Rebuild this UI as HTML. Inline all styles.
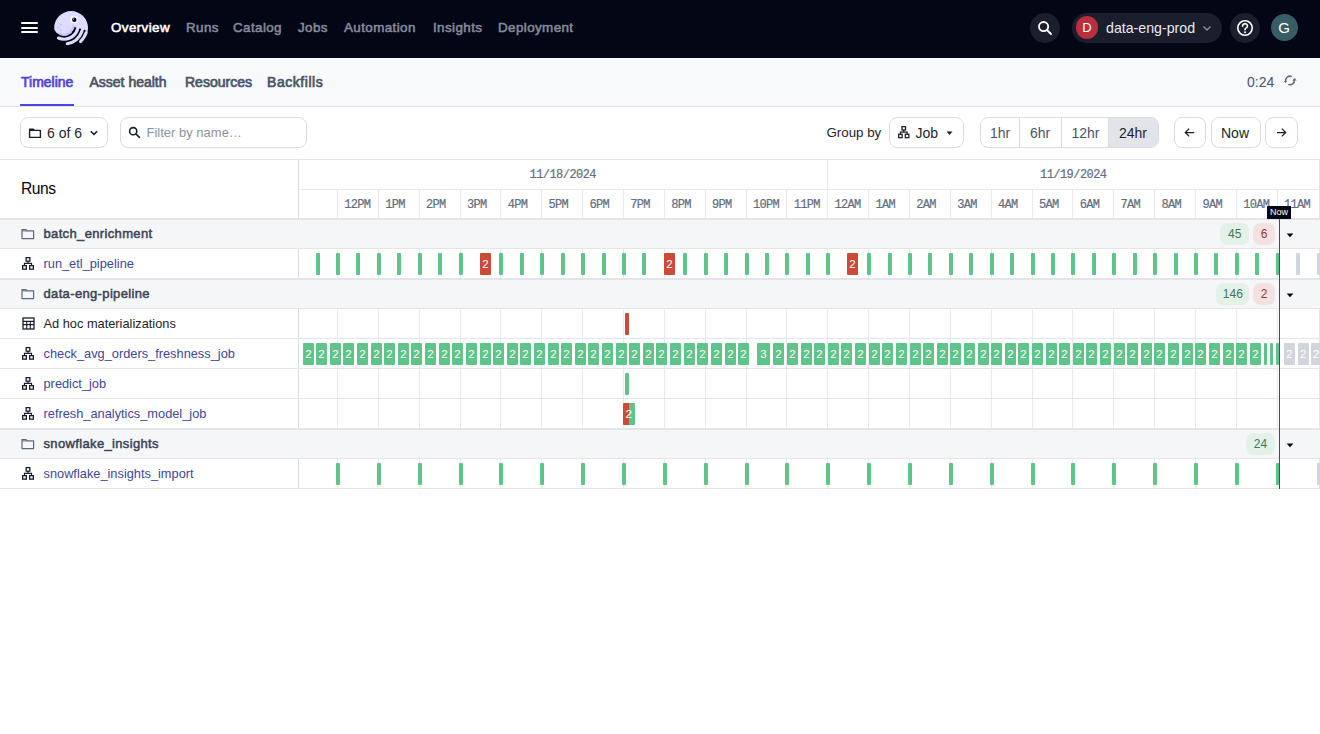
<!DOCTYPE html>
<html><head><meta charset="utf-8"><style>
*{box-sizing:border-box;margin:0;padding:0}
html,body{width:1320px;height:734px;overflow:hidden;background:#fff;font-family:"Liberation Sans",sans-serif;color:#030615}
.a{position:absolute}
.nav{left:0;top:0;width:1320px;height:58px;background:#030615}
.navtxt{top:18.6px;font-size:13.4px;letter-spacing:0.4px;font-weight:400;-webkit-text-stroke:0.55px currentColor;color:#848a9c;white-space:nowrap;line-height:18px}
.sub{left:0;top:58px;width:1320px;height:49px;background:#f8f9fb;border-bottom:1px solid #e3e5ea}
.tab{top:73px;font-size:14px;font-weight:400;-webkit-text-stroke:0.7px currentColor;color:#4b5567;line-height:18px;white-space:nowrap}
.btn{border:1px solid #d9dce3;border-radius:8px;background:#fff;height:31px;top:117px}
.t14{font-size:14px;line-height:18px;white-space:nowrap}
.mono{font-family:"Liberation Mono",monospace;font-size:12px;letter-spacing:-0.55px;color:#646d80;-webkit-text-stroke:0.2px currentColor;line-height:14px;white-space:nowrap}
.hl{width:1px;background:#e8eaee}
.grp{left:0;width:1320px;height:30px;background:#f5f6f8}
.gname{font-size:13px;font-weight:400;letter-spacing:0.35px;-webkit-text-stroke:0.5px currentColor;color:#3c4354;line-height:16px;white-space:nowrap}
.jname{font-size:12.8px;color:#40469a;line-height:16px;white-space:nowrap}
.bar{height:22px;border-radius:1px}
.box{height:22px;border-radius:1px;color:#fff;font-size:11.5px;line-height:22px;text-align:center;overflow:hidden}
.pill{height:22px;top:0;border-radius:7px;font-size:12px;line-height:22px;text-align:center}
</style></head>
<body>
<div class="a nav"></div><div class="a" style="left:21px;top:22px;width:17px;height:2px;background:#fff;border-radius:1px"></div><div class="a" style="left:21px;top:26.6px;width:17px;height:2px;background:#fff;border-radius:1px"></div><div class="a" style="left:21px;top:31.2px;width:17px;height:2px;background:#fff;border-radius:1px"></div><svg class="a" style="left:50px;top:7.5px" width="42" height="41" viewBox="0 0 42 41"><defs><clipPath id="hc"><circle cx="21.099999999999994" cy="20" r="18.2"/></clipPath></defs><g clip-path="url(#hc)"><circle cx="21.099999999999994" cy="20" r="16.9" fill="#dedcfc"/><path d="M23.56 17.84 A9.6 9.6 0 0 1 9.20 25.31" fill="none" stroke="#c9c6f6" stroke-width="2.2" stroke-linecap="round"/><path d="M37.30 27.37 A25.5 25.5 0 0 1 -10.63 10.40" fill="none" stroke="#030615" stroke-width="29.3"/><path d="M25.29 20.24 A11.75 11.75 0 0 1 23.00 24.55" fill="none" stroke="#030615" stroke-width="2.2" stroke-linecap="round"/><path d="M29.96 21.58 A16.6 16.6 0 0 1 26.72 27.67" fill="none" stroke="#030615" stroke-width="2.2" stroke-linecap="round"/><path d="M34.57 22.90 A21.4 21.4 0 0 1 30.39 30.76" fill="none" stroke="#030615" stroke-width="2.2" stroke-linecap="round"/><path d="M27.34 21.86 A14.2 14.2 0 0 1 8.45 30.07" fill="none" stroke="#dedcfc" stroke-width="3.2" stroke-linecap="round"/><path d="M31.85 23.50 A19.0 19.0 0 0 1 17.30 35.71" fill="none" stroke="#dedcfc" stroke-width="3.2" stroke-linecap="round"/><path d="M36.08 25.04 A23.5 23.5 0 0 1 30.62 33.62" fill="none" stroke="#dedcfc" stroke-width="3.2" stroke-linecap="round"/></g><circle cx="24" cy="11.5" r="3.7" fill="#fff"/><circle cx="24.299999999999997" cy="11.8" r="2.2" fill="#030615"/><circle cx="23.599999999999994" cy="11.100000000000001" r="0.6" fill="#fff"/><circle cx="10.899999999999999" cy="16.8" r="0.95" fill="#c9c6f6"/><circle cx="8.399999999999999" cy="19.5" r="0.95" fill="#c9c6f6"/><circle cx="11" cy="22.2" r="0.95" fill="#c9c6f6"/></svg><div class="a navtxt" style="left:111px;color:#ffffff">Overview</div><div class="a navtxt" style="left:186px">Runs</div><div class="a navtxt" style="left:233px">Catalog</div><div class="a navtxt" style="left:298px">Jobs</div><div class="a navtxt" style="left:344px">Automation</div><div class="a navtxt" style="left:433px">Insights</div><div class="a navtxt" style="left:498px">Deployment</div><div class="a" style="left:1030px;top:12.6px;width:30px;height:30px;border-radius:15px;background:#1b1f2d"></div><svg class="a" style="left:1037px;top:19.6px" width="16" height="16" viewBox="0 0 16 16"><circle cx="6.6" cy="6.6" r="4.6" fill="none" stroke="#fff" stroke-width="1.8"/><path d="M10 10 L14 14" stroke="#fff" stroke-width="1.9" stroke-linecap="round"/></svg><div class="a" style="left:1072px;top:12.6px;width:150px;height:30px;border-radius:15px;background:#1b1f2d"></div><div class="a" style="left:1075.7px;top:16.1px;width:22.6px;height:22.6px;border-radius:12px;background:#b92f3d;color:#fff;font-size:13px;line-height:23px;text-align:center">D</div><div class="a t14" style="left:1106px;top:18.6px;color:#e8eaf0;font-size:14.2px">data-eng-prod</div><svg class="a" style="left:1202px;top:23.6px" width="10" height="8" viewBox="0 0 10 8"><path d="M1.5 2.5 L5 6 L8.5 2.5" fill="none" stroke="#8a8fa0" stroke-width="1.3"/></svg><div class="a" style="left:1230px;top:12.6px;width:30px;height:30px;border-radius:15px;background:#1b1f2d"></div><svg class="a" style="left:1236px;top:18.6px" width="18" height="18" viewBox="0 0 18 18"><circle cx="9" cy="9" r="7.2" fill="none" stroke="#fff" stroke-width="1.6"/><path d="M6.6 7.2 Q6.6 4.8 9 4.8 Q11.4 4.8 11.4 7 Q11.4 8.4 9.9 9.1 Q9 9.6 9 10.8" fill="none" stroke="#fff" stroke-width="1.6" stroke-linecap="round"/><circle cx="9" cy="13.2" r="1" fill="#fff"/></svg><div class="a" style="left:1270.5px;top:13.5px;width:27px;height:27px;border-radius:14px;background:#395d67;color:#fff;font-size:15px;line-height:27px;text-align:center">G</div><div class="a sub"></div><div class="a tab" style="left:21px;color:#4f43dd">Timeline</div><div class="a tab" style="left:89.5px">Asset health</div><div class="a tab" style="left:185px">Resources</div><div class="a tab" style="left:267px;color:#4b5567;letter-spacing:0.55px">Backfills</div><div class="a" style="left:20px;top:104px;width:54px;height:2px;background:#4f43dd"></div><div class="a t14" style="left:1247px;top:72.5px;color:#4b5567">0:24</div><svg class="a" style="left:1280px;top:72px" width="20" height="18" viewBox="0 0 20 18"><path d="M11.75 4.57 A4.3 4.3 0 0 0 5.71 9.2" fill="none" stroke="#5f6a7e" stroke-width="1.5"/><path d="M8.25 12.43 A4.3 4.3 0 0 0 14.29 8.0" fill="none" stroke="#5f6a7e" stroke-width="1.5"/><path d="M5.5 11 L3.7 8.9 L7.3 8.9Z" fill="#5f6a7e"/><path d="M14.5 5.9 L12.4 8.5 L16.7 8.5Z" fill="#5f6a7e"/></svg><div class="a btn" style="left:20px;width:88px"></div><svg class="a" style="left:28px;top:126.5px" width="14" height="12" viewBox="0 0 14 12"><path d="M1.6 2.2 L5.4 2.2 L6.6 3.4 L12.4 3.4 L12.4 10.4 L1.6 10.4 Z" fill="none" stroke="#1a1f2b" stroke-width="1.4" stroke-linejoin="round"/><path d="M1.6 3.4 L6.6 3.4" stroke="#1a1f2b" stroke-width="1.2"/></svg><div class="a t14" style="left:47px;top:123.5px;color:#1a1f2b">6 of 6</div><svg class="a" style="left:88.7px;top:129px" width="10" height="8" viewBox="0 0 10 8"><path d="M1.8 2.2 L5 5.4 L8.2 2.2" fill="none" stroke="#1a1f2b" stroke-width="1.5"/></svg><div class="a btn" style="left:120px;width:187px"></div><svg class="a" style="left:128px;top:126px" width="13" height="13" viewBox="0 0 13 13"><circle cx="5.2" cy="5.2" r="3.6" fill="none" stroke="#1a1f2b" stroke-width="1.6"/><path d="M8 8 L11.4 11.4" stroke="#1a1f2b" stroke-width="1.7" stroke-linecap="round"/></svg><div class="a t14" style="left:146.5px;top:123.5px;color:#8a93a3;font-size:13px">Filter by name…</div><div class="a t14" style="left:826.5px;top:123.5px;color:#1a1f2b;font-size:13.3px">Group by</div><div class="a btn" style="left:889px;width:75px"></div><svg class="a" style="left:898px;top:126.3px" width="11.5" height="12.5" viewBox="0 0 12 13"><rect x="4.15" y="0.65" width="3.7" height="3.5" fill="none" stroke="#1a1f2b" stroke-width="1.35"/><rect x="0.65" y="8.65" width="3.7" height="3.5" fill="none" stroke="#1a1f2b" stroke-width="1.35"/><rect x="7.65" y="8.65" width="3.7" height="3.5" fill="none" stroke="#1a1f2b" stroke-width="1.35"/><path d="M6 4.2 V6.4 M2.5 8.6 V6.4 H9.5 V8.6" fill="none" stroke="#1a1f2b" stroke-width="1.25"/></svg><div class="a t14" style="left:915.5px;top:123.5px;color:#1a1f2b">Job</div><svg class="a" style="left:945.9px;top:130.7px" width="7" height="5" viewBox="0 0 7 5"><path d="M0.5 0.4 L6.5 0.4 L3.5 4.1Z" fill="#1a1f2b"/></svg><div class="a" style="left:979.5px;top:117px;width:179px;height:31px;border:1px solid #d9dce3;border-radius:8px;overflow:hidden;background:#fff"><div class="a" style="left:127.5px;top:0;width:51px;height:31px;background:#e2e4e9"></div></div><div class="a" style="left:1018.5px;top:118px;width:1px;height:29px;background:#d9dce3"></div><div class="a" style="left:1060.5px;top:118px;width:1px;height:29px;background:#d9dce3"></div><div class="a" style="left:1107.5px;top:118px;width:1px;height:29px;background:#d9dce3"></div><div class="a t14" style="left:990px;top:123.5px;color:#4b5567">1hr</div><div class="a t14" style="left:1030px;top:123.5px;color:#4b5567">6hr</div><div class="a t14" style="left:1071.5px;top:123.5px;color:#4b5567">12hr</div><div class="a t14" style="left:1119px;top:123.5px;color:#1a1f2b">24hr</div><div class="a btn" style="left:1173.5px;width:32.5px"></div><svg class="a" style="left:1183px;top:126px" width="13" height="13" viewBox="0 0 13 13"><path d="M11.2 6.5 H2.4 M6.2 2.6 L2.3 6.5 L6.2 10.4" fill="none" stroke="#1a1f2b" stroke-width="1.25"/></svg><div class="a btn" style="left:1210.5px;width:50px"></div><div class="a t14" style="left:1221px;top:123.5px;color:#1a1f2b">Now</div><div class="a btn" style="left:1264.5px;width:33.5px"></div><svg class="a" style="left:1274.5px;top:126px" width="13" height="13" viewBox="0 0 13 13"><path d="M2 6.5 H10.6 M6.8 2.6 L10.7 6.5 L6.8 10.4" fill="none" stroke="#1a1f2b" stroke-width="1.25"/></svg><div class="a" style="left:0;top:159px;width:1320px;height:1px;background:#e3e5ea"></div><div class="a" style="left:298px;top:159px;width:1px;height:330px;background:#dadce3"></div><div class="a" style="left:1319px;top:159px;width:1px;height:330px;background:#e3e5ea"></div><div class="a" style="left:21px;top:180px;font-size:15.6px;letter-spacing:-0.45px;line-height:18px;color:#030615">Runs</div><div class="a" style="left:299px;top:189px;width:1021px;height:1px;background:#e6e8ed"></div><div class="a" style="left:827px;top:159px;width:1px;height:30px;background:#e6e8ed"></div><div class="a mono" style="left:529.5px;top:168px">11/18/2024</div><div class="a mono" style="left:1040px;top:168px">11/19/2024</div><div class="a hl" style="left:337px;top:190px;height:29px"></div><div class="a mono" style="left:344.3px;top:198px;letter-spacing:-0.7px">12PM</div><div class="a hl" style="left:378px;top:190px;height:29px"></div><div class="a mono" style="left:385.2px;top:198px;letter-spacing:-0.7px">1PM</div><div class="a hl" style="left:419px;top:190px;height:29px"></div><div class="a mono" style="left:426.0px;top:198px;letter-spacing:-0.7px">2PM</div><div class="a hl" style="left:460px;top:190px;height:29px"></div><div class="a mono" style="left:466.9px;top:198px;letter-spacing:-0.7px">3PM</div><div class="a hl" style="left:500px;top:190px;height:29px"></div><div class="a mono" style="left:507.7px;top:198px;letter-spacing:-0.7px">4PM</div><div class="a hl" style="left:541px;top:190px;height:29px"></div><div class="a mono" style="left:548.6px;top:198px;letter-spacing:-0.7px">5PM</div><div class="a hl" style="left:582px;top:190px;height:29px"></div><div class="a mono" style="left:589.5px;top:198px;letter-spacing:-0.7px">6PM</div><div class="a hl" style="left:623px;top:190px;height:29px"></div><div class="a mono" style="left:630.3px;top:198px;letter-spacing:-0.7px">7PM</div><div class="a hl" style="left:664px;top:190px;height:29px"></div><div class="a mono" style="left:671.2px;top:198px;letter-spacing:-0.7px">8PM</div><div class="a hl" style="left:705px;top:190px;height:29px"></div><div class="a mono" style="left:712.0px;top:198px;letter-spacing:-0.7px">9PM</div><div class="a hl" style="left:746px;top:190px;height:29px"></div><div class="a mono" style="left:752.9px;top:198px;letter-spacing:-0.7px">10PM</div><div class="a hl" style="left:786px;top:190px;height:29px"></div><div class="a mono" style="left:793.8px;top:198px;letter-spacing:-0.7px">11PM</div><div class="a hl" style="left:827px;top:190px;height:29px"></div><div class="a mono" style="left:834.6px;top:198px;letter-spacing:-0.7px">12AM</div><div class="a hl" style="left:868px;top:190px;height:29px"></div><div class="a mono" style="left:875.5px;top:198px;letter-spacing:-0.7px">1AM</div><div class="a hl" style="left:909px;top:190px;height:29px"></div><div class="a mono" style="left:916.3px;top:198px;letter-spacing:-0.7px">2AM</div><div class="a hl" style="left:950px;top:190px;height:29px"></div><div class="a mono" style="left:957.2px;top:198px;letter-spacing:-0.7px">3AM</div><div class="a hl" style="left:991px;top:190px;height:29px"></div><div class="a mono" style="left:998.1px;top:198px;letter-spacing:-0.7px">4AM</div><div class="a hl" style="left:1032px;top:190px;height:29px"></div><div class="a mono" style="left:1038.9px;top:198px;letter-spacing:-0.7px">5AM</div><div class="a hl" style="left:1072px;top:190px;height:29px"></div><div class="a mono" style="left:1079.8px;top:198px;letter-spacing:-0.7px">6AM</div><div class="a hl" style="left:1113px;top:190px;height:29px"></div><div class="a mono" style="left:1120.6px;top:198px;letter-spacing:-0.7px">7AM</div><div class="a hl" style="left:1154px;top:190px;height:29px"></div><div class="a mono" style="left:1161.5px;top:198px;letter-spacing:-0.7px">8AM</div><div class="a hl" style="left:1195px;top:190px;height:29px"></div><div class="a mono" style="left:1202.4px;top:198px;letter-spacing:-0.7px">9AM</div><div class="a hl" style="left:1236px;top:190px;height:29px"></div><div class="a mono" style="left:1243.2px;top:198px;letter-spacing:-0.7px">10AM</div><div class="a hl" style="left:1277px;top:190px;height:29px"></div><div class="a mono" style="left:1284.1px;top:198px;letter-spacing:-0.7px">11AM</div><div class="a" style="left:0;top:218px;width:1320px;height:1px;background:#e3e5ea"></div><div class="a grp" style="top:220px;height:28px"></div><div class="a" style="left:0;top:248px;width:1320px;height:1px;background:#e3e5ea"></div><div class="a" style="left:0;top:219px;width:1320px;height:1px;background:#e3e5ea"></div><svg class="a" style="left:21px;top:228px" width="14" height="12" viewBox="0 0 14 12"><path d="M1 1.6 L5 1.6 L6.3 2.9 L12.6 2.9 L12.6 10.6 L1 10.6 Z" fill="none" stroke="#5d687c" stroke-width="1.2" stroke-linejoin="round"/><path d="M1 2.9 L6.3 2.9" stroke="#5d687c" stroke-width="1"/></svg><div class="a gname" style="left:43.5px;top:226px">batch_enrichment</div><div class="a pill" style="left:1253px;top:223px;width:22px;background:#f4e2e2;color:#8f3a36">6</div><div class="a pill" style="left:1220.3px;top:223px;width:29px;background:#e3f1e8;color:#3b7b56">45</div><svg class="a" style="left:1286px;top:233px" width="8" height="5" viewBox="0 0 8 5"><path d="M0.6 0.5 L7.4 0.5 L4 4.2Z" fill="#030615"/></svg><div class="a" style="left:0;top:278px;width:1320px;height:1px;background:#e3e5ea"></div><div class="a hl" style="left:337px;top:249px;height:29px"></div><div class="a hl" style="left:378px;top:249px;height:29px"></div><div class="a hl" style="left:419px;top:249px;height:29px"></div><div class="a hl" style="left:460px;top:249px;height:29px"></div><div class="a hl" style="left:500px;top:249px;height:29px"></div><div class="a hl" style="left:541px;top:249px;height:29px"></div><div class="a hl" style="left:582px;top:249px;height:29px"></div><div class="a hl" style="left:623px;top:249px;height:29px"></div><div class="a hl" style="left:664px;top:249px;height:29px"></div><div class="a hl" style="left:705px;top:249px;height:29px"></div><div class="a hl" style="left:746px;top:249px;height:29px"></div><div class="a hl" style="left:786px;top:249px;height:29px"></div><div class="a hl" style="left:827px;top:249px;height:29px"></div><div class="a hl" style="left:868px;top:249px;height:29px"></div><div class="a hl" style="left:909px;top:249px;height:29px"></div><div class="a hl" style="left:950px;top:249px;height:29px"></div><div class="a hl" style="left:991px;top:249px;height:29px"></div><div class="a hl" style="left:1032px;top:249px;height:29px"></div><div class="a hl" style="left:1072px;top:249px;height:29px"></div><div class="a hl" style="left:1113px;top:249px;height:29px"></div><div class="a hl" style="left:1154px;top:249px;height:29px"></div><div class="a hl" style="left:1195px;top:249px;height:29px"></div><div class="a hl" style="left:1236px;top:249px;height:29px"></div><div class="a hl" style="left:1277px;top:249px;height:29px"></div><svg class="a" style="left:22px;top:257px" width="12" height="13" viewBox="0 0 12 13"><rect x="4.15" y="0.65" width="3.7" height="3.5" fill="none" stroke="#1a1f2b" stroke-width="1.3"/><rect x="0.65" y="8.65" width="3.7" height="3.5" fill="none" stroke="#1a1f2b" stroke-width="1.3"/><rect x="7.65" y="8.65" width="3.7" height="3.5" fill="none" stroke="#1a1f2b" stroke-width="1.3"/><path d="M6 4.2 V6.4 M2.5 8.6 V6.4 H9.5 V8.6" fill="none" stroke="#1a1f2b" stroke-width="1.2"/></svg><div class="a jname" style="left:43.5px;top:256px">run_etl_pipeline</div><div class="a grp" style="top:280px;height:28px"></div><div class="a" style="left:0;top:308px;width:1320px;height:1px;background:#e3e5ea"></div><div class="a" style="left:0;top:279px;width:1320px;height:1px;background:#e3e5ea"></div><svg class="a" style="left:21px;top:288px" width="14" height="12" viewBox="0 0 14 12"><path d="M1 1.6 L5 1.6 L6.3 2.9 L12.6 2.9 L12.6 10.6 L1 10.6 Z" fill="none" stroke="#5d687c" stroke-width="1.2" stroke-linejoin="round"/><path d="M1 2.9 L6.3 2.9" stroke="#5d687c" stroke-width="1"/></svg><div class="a gname" style="left:43.5px;top:286px">data-eng-pipeline</div><div class="a pill" style="left:1253px;top:283px;width:22px;background:#f4e2e2;color:#8f3a36">2</div><div class="a pill" style="left:1216.3px;top:283px;width:33px;background:#e3f1e8;color:#3b7b56">146</div><svg class="a" style="left:1286px;top:293px" width="8" height="5" viewBox="0 0 8 5"><path d="M0.6 0.5 L7.4 0.5 L4 4.2Z" fill="#030615"/></svg><div class="a" style="left:0;top:338px;width:1320px;height:1px;background:#e3e5ea"></div><div class="a hl" style="left:337px;top:309px;height:29px"></div><div class="a hl" style="left:378px;top:309px;height:29px"></div><div class="a hl" style="left:419px;top:309px;height:29px"></div><div class="a hl" style="left:460px;top:309px;height:29px"></div><div class="a hl" style="left:500px;top:309px;height:29px"></div><div class="a hl" style="left:541px;top:309px;height:29px"></div><div class="a hl" style="left:582px;top:309px;height:29px"></div><div class="a hl" style="left:623px;top:309px;height:29px"></div><div class="a hl" style="left:664px;top:309px;height:29px"></div><div class="a hl" style="left:705px;top:309px;height:29px"></div><div class="a hl" style="left:746px;top:309px;height:29px"></div><div class="a hl" style="left:786px;top:309px;height:29px"></div><div class="a hl" style="left:827px;top:309px;height:29px"></div><div class="a hl" style="left:868px;top:309px;height:29px"></div><div class="a hl" style="left:909px;top:309px;height:29px"></div><div class="a hl" style="left:950px;top:309px;height:29px"></div><div class="a hl" style="left:991px;top:309px;height:29px"></div><div class="a hl" style="left:1032px;top:309px;height:29px"></div><div class="a hl" style="left:1072px;top:309px;height:29px"></div><div class="a hl" style="left:1113px;top:309px;height:29px"></div><div class="a hl" style="left:1154px;top:309px;height:29px"></div><div class="a hl" style="left:1195px;top:309px;height:29px"></div><div class="a hl" style="left:1236px;top:309px;height:29px"></div><div class="a hl" style="left:1277px;top:309px;height:29px"></div><svg class="a" style="left:22px;top:317px" width="13" height="13" viewBox="0 0 13 13"><rect x="1" y="1" width="11" height="11" fill="none" stroke="#1a1f2b" stroke-width="1.3"/><path d="M1 4.4 H12 M1 7.6 H12 M4.7 4.4 V12 M8.3 4.4 V12" stroke="#1a1f2b" stroke-width="1.1"/></svg><div class="a jname" style="left:43.5px;top:316px;color:#1a1f2b">Ad hoc materializations</div><div class="a" style="left:0;top:368px;width:1320px;height:1px;background:#e3e5ea"></div><div class="a hl" style="left:337px;top:339px;height:29px"></div><div class="a hl" style="left:378px;top:339px;height:29px"></div><div class="a hl" style="left:419px;top:339px;height:29px"></div><div class="a hl" style="left:460px;top:339px;height:29px"></div><div class="a hl" style="left:500px;top:339px;height:29px"></div><div class="a hl" style="left:541px;top:339px;height:29px"></div><div class="a hl" style="left:582px;top:339px;height:29px"></div><div class="a hl" style="left:623px;top:339px;height:29px"></div><div class="a hl" style="left:664px;top:339px;height:29px"></div><div class="a hl" style="left:705px;top:339px;height:29px"></div><div class="a hl" style="left:746px;top:339px;height:29px"></div><div class="a hl" style="left:786px;top:339px;height:29px"></div><div class="a hl" style="left:827px;top:339px;height:29px"></div><div class="a hl" style="left:868px;top:339px;height:29px"></div><div class="a hl" style="left:909px;top:339px;height:29px"></div><div class="a hl" style="left:950px;top:339px;height:29px"></div><div class="a hl" style="left:991px;top:339px;height:29px"></div><div class="a hl" style="left:1032px;top:339px;height:29px"></div><div class="a hl" style="left:1072px;top:339px;height:29px"></div><div class="a hl" style="left:1113px;top:339px;height:29px"></div><div class="a hl" style="left:1154px;top:339px;height:29px"></div><div class="a hl" style="left:1195px;top:339px;height:29px"></div><div class="a hl" style="left:1236px;top:339px;height:29px"></div><div class="a hl" style="left:1277px;top:339px;height:29px"></div><svg class="a" style="left:22px;top:347px" width="12" height="13" viewBox="0 0 12 13"><rect x="4.15" y="0.65" width="3.7" height="3.5" fill="none" stroke="#1a1f2b" stroke-width="1.3"/><rect x="0.65" y="8.65" width="3.7" height="3.5" fill="none" stroke="#1a1f2b" stroke-width="1.3"/><rect x="7.65" y="8.65" width="3.7" height="3.5" fill="none" stroke="#1a1f2b" stroke-width="1.3"/><path d="M6 4.2 V6.4 M2.5 8.6 V6.4 H9.5 V8.6" fill="none" stroke="#1a1f2b" stroke-width="1.2"/></svg><div class="a jname" style="left:43.5px;top:346px">check_avg_orders_freshness_job</div><div class="a" style="left:0;top:398px;width:1320px;height:1px;background:#e3e5ea"></div><div class="a hl" style="left:337px;top:369px;height:29px"></div><div class="a hl" style="left:378px;top:369px;height:29px"></div><div class="a hl" style="left:419px;top:369px;height:29px"></div><div class="a hl" style="left:460px;top:369px;height:29px"></div><div class="a hl" style="left:500px;top:369px;height:29px"></div><div class="a hl" style="left:541px;top:369px;height:29px"></div><div class="a hl" style="left:582px;top:369px;height:29px"></div><div class="a hl" style="left:623px;top:369px;height:29px"></div><div class="a hl" style="left:664px;top:369px;height:29px"></div><div class="a hl" style="left:705px;top:369px;height:29px"></div><div class="a hl" style="left:746px;top:369px;height:29px"></div><div class="a hl" style="left:786px;top:369px;height:29px"></div><div class="a hl" style="left:827px;top:369px;height:29px"></div><div class="a hl" style="left:868px;top:369px;height:29px"></div><div class="a hl" style="left:909px;top:369px;height:29px"></div><div class="a hl" style="left:950px;top:369px;height:29px"></div><div class="a hl" style="left:991px;top:369px;height:29px"></div><div class="a hl" style="left:1032px;top:369px;height:29px"></div><div class="a hl" style="left:1072px;top:369px;height:29px"></div><div class="a hl" style="left:1113px;top:369px;height:29px"></div><div class="a hl" style="left:1154px;top:369px;height:29px"></div><div class="a hl" style="left:1195px;top:369px;height:29px"></div><div class="a hl" style="left:1236px;top:369px;height:29px"></div><div class="a hl" style="left:1277px;top:369px;height:29px"></div><svg class="a" style="left:22px;top:377px" width="12" height="13" viewBox="0 0 12 13"><rect x="4.15" y="0.65" width="3.7" height="3.5" fill="none" stroke="#1a1f2b" stroke-width="1.3"/><rect x="0.65" y="8.65" width="3.7" height="3.5" fill="none" stroke="#1a1f2b" stroke-width="1.3"/><rect x="7.65" y="8.65" width="3.7" height="3.5" fill="none" stroke="#1a1f2b" stroke-width="1.3"/><path d="M6 4.2 V6.4 M2.5 8.6 V6.4 H9.5 V8.6" fill="none" stroke="#1a1f2b" stroke-width="1.2"/></svg><div class="a jname" style="left:43.5px;top:376px">predict_job</div><div class="a" style="left:0;top:428px;width:1320px;height:1px;background:#e3e5ea"></div><div class="a hl" style="left:337px;top:399px;height:29px"></div><div class="a hl" style="left:378px;top:399px;height:29px"></div><div class="a hl" style="left:419px;top:399px;height:29px"></div><div class="a hl" style="left:460px;top:399px;height:29px"></div><div class="a hl" style="left:500px;top:399px;height:29px"></div><div class="a hl" style="left:541px;top:399px;height:29px"></div><div class="a hl" style="left:582px;top:399px;height:29px"></div><div class="a hl" style="left:623px;top:399px;height:29px"></div><div class="a hl" style="left:664px;top:399px;height:29px"></div><div class="a hl" style="left:705px;top:399px;height:29px"></div><div class="a hl" style="left:746px;top:399px;height:29px"></div><div class="a hl" style="left:786px;top:399px;height:29px"></div><div class="a hl" style="left:827px;top:399px;height:29px"></div><div class="a hl" style="left:868px;top:399px;height:29px"></div><div class="a hl" style="left:909px;top:399px;height:29px"></div><div class="a hl" style="left:950px;top:399px;height:29px"></div><div class="a hl" style="left:991px;top:399px;height:29px"></div><div class="a hl" style="left:1032px;top:399px;height:29px"></div><div class="a hl" style="left:1072px;top:399px;height:29px"></div><div class="a hl" style="left:1113px;top:399px;height:29px"></div><div class="a hl" style="left:1154px;top:399px;height:29px"></div><div class="a hl" style="left:1195px;top:399px;height:29px"></div><div class="a hl" style="left:1236px;top:399px;height:29px"></div><div class="a hl" style="left:1277px;top:399px;height:29px"></div><svg class="a" style="left:22px;top:407px" width="12" height="13" viewBox="0 0 12 13"><rect x="4.15" y="0.65" width="3.7" height="3.5" fill="none" stroke="#1a1f2b" stroke-width="1.3"/><rect x="0.65" y="8.65" width="3.7" height="3.5" fill="none" stroke="#1a1f2b" stroke-width="1.3"/><rect x="7.65" y="8.65" width="3.7" height="3.5" fill="none" stroke="#1a1f2b" stroke-width="1.3"/><path d="M6 4.2 V6.4 M2.5 8.6 V6.4 H9.5 V8.6" fill="none" stroke="#1a1f2b" stroke-width="1.2"/></svg><div class="a jname" style="left:43.5px;top:406px">refresh_analytics_model_job</div><div class="a grp" style="top:430px;height:28px"></div><div class="a" style="left:0;top:458px;width:1320px;height:1px;background:#e3e5ea"></div><div class="a" style="left:0;top:429px;width:1320px;height:1px;background:#e3e5ea"></div><svg class="a" style="left:21px;top:438px" width="14" height="12" viewBox="0 0 14 12"><path d="M1 1.6 L5 1.6 L6.3 2.9 L12.6 2.9 L12.6 10.6 L1 10.6 Z" fill="none" stroke="#5d687c" stroke-width="1.2" stroke-linejoin="round"/><path d="M1 2.9 L6.3 2.9" stroke="#5d687c" stroke-width="1"/></svg><div class="a gname" style="left:43.5px;top:436px">snowflake_insights</div><div class="a pill" style="left:1246px;top:433px;width:29px;background:#e3f1e8;color:#3b7b56">24</div><svg class="a" style="left:1286px;top:443px" width="8" height="5" viewBox="0 0 8 5"><path d="M0.6 0.5 L7.4 0.5 L4 4.2Z" fill="#030615"/></svg><div class="a" style="left:0;top:488px;width:1320px;height:1px;background:#e3e5ea"></div><div class="a hl" style="left:337px;top:459px;height:29px"></div><div class="a hl" style="left:378px;top:459px;height:29px"></div><div class="a hl" style="left:419px;top:459px;height:29px"></div><div class="a hl" style="left:460px;top:459px;height:29px"></div><div class="a hl" style="left:500px;top:459px;height:29px"></div><div class="a hl" style="left:541px;top:459px;height:29px"></div><div class="a hl" style="left:582px;top:459px;height:29px"></div><div class="a hl" style="left:623px;top:459px;height:29px"></div><div class="a hl" style="left:664px;top:459px;height:29px"></div><div class="a hl" style="left:705px;top:459px;height:29px"></div><div class="a hl" style="left:746px;top:459px;height:29px"></div><div class="a hl" style="left:786px;top:459px;height:29px"></div><div class="a hl" style="left:827px;top:459px;height:29px"></div><div class="a hl" style="left:868px;top:459px;height:29px"></div><div class="a hl" style="left:909px;top:459px;height:29px"></div><div class="a hl" style="left:950px;top:459px;height:29px"></div><div class="a hl" style="left:991px;top:459px;height:29px"></div><div class="a hl" style="left:1032px;top:459px;height:29px"></div><div class="a hl" style="left:1072px;top:459px;height:29px"></div><div class="a hl" style="left:1113px;top:459px;height:29px"></div><div class="a hl" style="left:1154px;top:459px;height:29px"></div><div class="a hl" style="left:1195px;top:459px;height:29px"></div><div class="a hl" style="left:1236px;top:459px;height:29px"></div><div class="a hl" style="left:1277px;top:459px;height:29px"></div><svg class="a" style="left:22px;top:467px" width="12" height="13" viewBox="0 0 12 13"><rect x="4.15" y="0.65" width="3.7" height="3.5" fill="none" stroke="#1a1f2b" stroke-width="1.3"/><rect x="0.65" y="8.65" width="3.7" height="3.5" fill="none" stroke="#1a1f2b" stroke-width="1.3"/><rect x="7.65" y="8.65" width="3.7" height="3.5" fill="none" stroke="#1a1f2b" stroke-width="1.3"/><path d="M6 4.2 V6.4 M2.5 8.6 V6.4 H9.5 V8.6" fill="none" stroke="#1a1f2b" stroke-width="1.2"/></svg><div class="a jname" style="left:43.5px;top:466px">snowflake_insights_import</div><div class="a bar" style="left:316px;top:253px;width:4px;background:#5ec489"></div><div class="a bar" style="left:336px;top:253px;width:4px;background:#5ec489"></div><div class="a bar" style="left:356px;top:253px;width:4px;background:#5ec489"></div><div class="a bar" style="left:377px;top:253px;width:4px;background:#5ec489"></div><div class="a bar" style="left:397px;top:253px;width:4px;background:#5ec489"></div><div class="a bar" style="left:418px;top:253px;width:4px;background:#5ec489"></div><div class="a bar" style="left:438px;top:253px;width:4px;background:#5ec489"></div><div class="a bar" style="left:459px;top:253px;width:4px;background:#5ec489"></div><div class="a box" style="left:480px;top:253px;width:11px;background:#cb4b36">2</div><div class="a bar" style="left:499px;top:253px;width:4px;background:#5ec489"></div><div class="a bar" style="left:520px;top:253px;width:4px;background:#5ec489"></div><div class="a bar" style="left:540px;top:253px;width:4px;background:#5ec489"></div><div class="a bar" style="left:561px;top:253px;width:4px;background:#5ec489"></div><div class="a bar" style="left:581px;top:253px;width:4px;background:#5ec489"></div><div class="a bar" style="left:602px;top:253px;width:4px;background:#5ec489"></div><div class="a bar" style="left:622px;top:253px;width:4px;background:#5ec489"></div><div class="a bar" style="left:642px;top:253px;width:4px;background:#5ec489"></div><div class="a box" style="left:664px;top:253px;width:11px;background:#cb4b36">2</div><div class="a bar" style="left:683px;top:253px;width:4px;background:#5ec489"></div><div class="a bar" style="left:704px;top:253px;width:4px;background:#5ec489"></div><div class="a bar" style="left:724px;top:253px;width:4px;background:#5ec489"></div><div class="a bar" style="left:745px;top:253px;width:4px;background:#5ec489"></div><div class="a bar" style="left:765px;top:253px;width:4px;background:#5ec489"></div><div class="a bar" style="left:785px;top:253px;width:4px;background:#5ec489"></div><div class="a bar" style="left:806px;top:253px;width:4px;background:#5ec489"></div><div class="a bar" style="left:826px;top:253px;width:4px;background:#5ec489"></div><div class="a box" style="left:847px;top:253px;width:11px;background:#cb4b36">2</div><div class="a bar" style="left:867px;top:253px;width:4px;background:#5ec489"></div><div class="a bar" style="left:888px;top:253px;width:4px;background:#5ec489"></div><div class="a bar" style="left:908px;top:253px;width:4px;background:#5ec489"></div><div class="a bar" style="left:928px;top:253px;width:4px;background:#5ec489"></div><div class="a bar" style="left:949px;top:253px;width:4px;background:#5ec489"></div><div class="a bar" style="left:969px;top:253px;width:4px;background:#5ec489"></div><div class="a bar" style="left:990px;top:253px;width:4px;background:#5ec489"></div><div class="a bar" style="left:1010px;top:253px;width:4px;background:#5ec489"></div><div class="a bar" style="left:1031px;top:253px;width:4px;background:#5ec489"></div><div class="a bar" style="left:1051px;top:253px;width:4px;background:#5ec489"></div><div class="a bar" style="left:1071px;top:253px;width:4px;background:#5ec489"></div><div class="a bar" style="left:1092px;top:253px;width:4px;background:#5ec489"></div><div class="a bar" style="left:1112px;top:253px;width:4px;background:#5ec489"></div><div class="a bar" style="left:1133px;top:253px;width:4px;background:#5ec489"></div><div class="a bar" style="left:1153px;top:253px;width:4px;background:#5ec489"></div><div class="a bar" style="left:1174px;top:253px;width:4px;background:#5ec489"></div><div class="a bar" style="left:1194px;top:253px;width:4px;background:#5ec489"></div><div class="a bar" style="left:1214px;top:253px;width:4px;background:#5ec489"></div><div class="a bar" style="left:1235px;top:253px;width:4px;background:#5ec489"></div><div class="a bar" style="left:1255px;top:253px;width:4px;background:#5ec489"></div><div class="a bar" style="left:1276px;top:253px;width:4px;background:#5ec489"></div><div class="a bar" style="left:1296px;top:253px;width:4px;background:#d2d5dc"></div><div class="a bar" style="left:1317px;top:253px;width:4px;background:#d2d5dc"></div><div class="a bar" style="left:625px;top:313px;width:4px;background:#cb4b36"></div><div class="a box" style="left:303px;top:343px;width:11px;background:#5ec489">2</div><div class="a box" style="left:316px;top:343px;width:11px;background:#5ec489">2</div><div class="a box" style="left:330px;top:343px;width:11px;background:#5ec489">2</div><div class="a box" style="left:343px;top:343px;width:11px;background:#5ec489">2</div><div class="a box" style="left:357px;top:343px;width:11px;background:#5ec489">2</div><div class="a box" style="left:371px;top:343px;width:11px;background:#5ec489">2</div><div class="a box" style="left:384px;top:343px;width:11px;background:#5ec489">2</div><div class="a box" style="left:398px;top:343px;width:11px;background:#5ec489">2</div><div class="a box" style="left:411px;top:343px;width:11px;background:#5ec489">2</div><div class="a box" style="left:425px;top:343px;width:11px;background:#5ec489">2</div><div class="a box" style="left:439px;top:343px;width:11px;background:#5ec489">2</div><div class="a box" style="left:452px;top:343px;width:11px;background:#5ec489">2</div><div class="a box" style="left:466px;top:343px;width:11px;background:#5ec489">2</div><div class="a box" style="left:480px;top:343px;width:11px;background:#5ec489">2</div><div class="a box" style="left:493px;top:343px;width:11px;background:#5ec489">2</div><div class="a box" style="left:507px;top:343px;width:11px;background:#5ec489">2</div><div class="a box" style="left:520px;top:343px;width:11px;background:#5ec489">2</div><div class="a box" style="left:534px;top:343px;width:11px;background:#5ec489">2</div><div class="a box" style="left:548px;top:343px;width:11px;background:#5ec489">2</div><div class="a box" style="left:561px;top:343px;width:11px;background:#5ec489">2</div><div class="a box" style="left:575px;top:343px;width:11px;background:#5ec489">2</div><div class="a box" style="left:588px;top:343px;width:11px;background:#5ec489">2</div><div class="a box" style="left:602px;top:343px;width:11px;background:#5ec489">2</div><div class="a box" style="left:616px;top:343px;width:11px;background:#5ec489">2</div><div class="a box" style="left:629px;top:343px;width:11px;background:#5ec489">2</div><div class="a box" style="left:643px;top:343px;width:11px;background:#5ec489">2</div><div class="a box" style="left:656px;top:343px;width:11px;background:#5ec489">2</div><div class="a box" style="left:670px;top:343px;width:11px;background:#5ec489">2</div><div class="a box" style="left:684px;top:343px;width:11px;background:#5ec489">2</div><div class="a box" style="left:697px;top:343px;width:11px;background:#5ec489">2</div><div class="a box" style="left:711px;top:343px;width:11px;background:#5ec489">2</div><div class="a box" style="left:725px;top:343px;width:11px;background:#5ec489">2</div><div class="a box" style="left:738px;top:343px;width:11px;background:#5ec489">2</div><div class="a box" style="left:757px;top:343px;width:13px;background:#5ec489">3</div><div class="a box" style="left:773px;top:343px;width:11px;background:#5ec489">2</div><div class="a box" style="left:787px;top:343px;width:11px;background:#5ec489">2</div><div class="a box" style="left:801px;top:343px;width:11px;background:#5ec489">2</div><div class="a box" style="left:814px;top:343px;width:11px;background:#5ec489">2</div><div class="a box" style="left:828px;top:343px;width:11px;background:#5ec489">2</div><div class="a box" style="left:841px;top:343px;width:11px;background:#5ec489">2</div><div class="a box" style="left:855px;top:343px;width:11px;background:#5ec489">2</div><div class="a box" style="left:869px;top:343px;width:11px;background:#5ec489">2</div><div class="a box" style="left:882px;top:343px;width:11px;background:#5ec489">2</div><div class="a box" style="left:896px;top:343px;width:11px;background:#5ec489">2</div><div class="a box" style="left:910px;top:343px;width:11px;background:#5ec489">2</div><div class="a box" style="left:923px;top:343px;width:11px;background:#5ec489">2</div><div class="a box" style="left:937px;top:343px;width:11px;background:#5ec489">2</div><div class="a box" style="left:950px;top:343px;width:11px;background:#5ec489">2</div><div class="a box" style="left:964px;top:343px;width:11px;background:#5ec489">2</div><div class="a box" style="left:978px;top:343px;width:11px;background:#5ec489">2</div><div class="a box" style="left:991px;top:343px;width:11px;background:#5ec489">2</div><div class="a box" style="left:1005px;top:343px;width:11px;background:#5ec489">2</div><div class="a box" style="left:1018px;top:343px;width:11px;background:#5ec489">2</div><div class="a box" style="left:1032px;top:343px;width:11px;background:#5ec489">2</div><div class="a box" style="left:1046px;top:343px;width:11px;background:#5ec489">2</div><div class="a box" style="left:1059px;top:343px;width:11px;background:#5ec489">2</div><div class="a box" style="left:1073px;top:343px;width:11px;background:#5ec489">2</div><div class="a box" style="left:1086px;top:343px;width:11px;background:#5ec489">2</div><div class="a box" style="left:1100px;top:343px;width:11px;background:#5ec489">2</div><div class="a box" style="left:1114px;top:343px;width:11px;background:#5ec489">2</div><div class="a box" style="left:1127px;top:343px;width:11px;background:#5ec489">2</div><div class="a box" style="left:1141px;top:343px;width:11px;background:#5ec489">2</div><div class="a box" style="left:1154px;top:343px;width:11px;background:#5ec489">2</div><div class="a box" style="left:1168px;top:343px;width:11px;background:#5ec489">2</div><div class="a box" style="left:1182px;top:343px;width:11px;background:#5ec489">2</div><div class="a box" style="left:1195px;top:343px;width:11px;background:#5ec489">2</div><div class="a box" style="left:1209px;top:343px;width:11px;background:#5ec489">2</div><div class="a box" style="left:1223px;top:343px;width:11px;background:#5ec489">2</div><div class="a box" style="left:1236px;top:343px;width:11px;background:#5ec489">2</div><div class="a box" style="left:1250px;top:343px;width:11px;background:#5ec489">2</div><div class="a bar" style="left:1264px;top:343px;width:3.3px;background:#5ec489"></div><div class="a bar" style="left:1270px;top:343px;width:3.3px;background:#5ec489"></div><div class="a bar" style="left:1276px;top:343px;width:3.3px;background:#5ec489"></div><div class="a box" style="left:1284px;top:343px;width:10.5px;background:#d2d5dc">2</div><div class="a box" style="left:1298px;top:343px;width:10.5px;background:#d2d5dc">2</div><div class="a box" style="left:1311px;top:343px;width:10.5px;background:#d2d5dc">2</div><div class="a bar" style="left:625px;top:373px;width:4px;background:#5ec489"></div><div class="a box" style="left:623px;top:403px;width:11.5px;background:linear-gradient(90deg,#cb4b36 46%,#5ec489 46%)">2</div><div class="a bar" style="left:336px;top:463px;width:4px;background:#5ec489"></div><div class="a bar" style="left:377px;top:463px;width:4px;background:#5ec489"></div><div class="a bar" style="left:418px;top:463px;width:4px;background:#5ec489"></div><div class="a bar" style="left:459px;top:463px;width:4px;background:#5ec489"></div><div class="a bar" style="left:499px;top:463px;width:4px;background:#5ec489"></div><div class="a bar" style="left:540px;top:463px;width:4px;background:#5ec489"></div><div class="a bar" style="left:581px;top:463px;width:4px;background:#5ec489"></div><div class="a bar" style="left:622px;top:463px;width:4px;background:#5ec489"></div><div class="a bar" style="left:663px;top:463px;width:4px;background:#5ec489"></div><div class="a bar" style="left:704px;top:463px;width:4px;background:#5ec489"></div><div class="a bar" style="left:745px;top:463px;width:4px;background:#5ec489"></div><div class="a bar" style="left:785px;top:463px;width:4px;background:#5ec489"></div><div class="a bar" style="left:826px;top:463px;width:4px;background:#5ec489"></div><div class="a bar" style="left:867px;top:463px;width:4px;background:#5ec489"></div><div class="a bar" style="left:908px;top:463px;width:4px;background:#5ec489"></div><div class="a bar" style="left:949px;top:463px;width:4px;background:#5ec489"></div><div class="a bar" style="left:990px;top:463px;width:4px;background:#5ec489"></div><div class="a bar" style="left:1031px;top:463px;width:4px;background:#5ec489"></div><div class="a bar" style="left:1071px;top:463px;width:4px;background:#5ec489"></div><div class="a bar" style="left:1112px;top:463px;width:4px;background:#5ec489"></div><div class="a bar" style="left:1153px;top:463px;width:4px;background:#5ec489"></div><div class="a bar" style="left:1194px;top:463px;width:4px;background:#5ec489"></div><div class="a bar" style="left:1235px;top:463px;width:4px;background:#5ec489"></div><div class="a bar" style="left:1276px;top:463px;width:4px;background:#5ec489"></div><div class="a bar" style="left:1317px;top:463px;width:4px;background:#d2d5dc"></div><div class="a" style="left:1279px;top:212px;width:1.3px;height:277px;background:#474b57"></div><div class="a" style="left:1267px;top:206px;width:24px;height:13px;background:#030615;color:#fff;font-size:9px;line-height:13px;text-align:center">Now</div>
</body></html>
